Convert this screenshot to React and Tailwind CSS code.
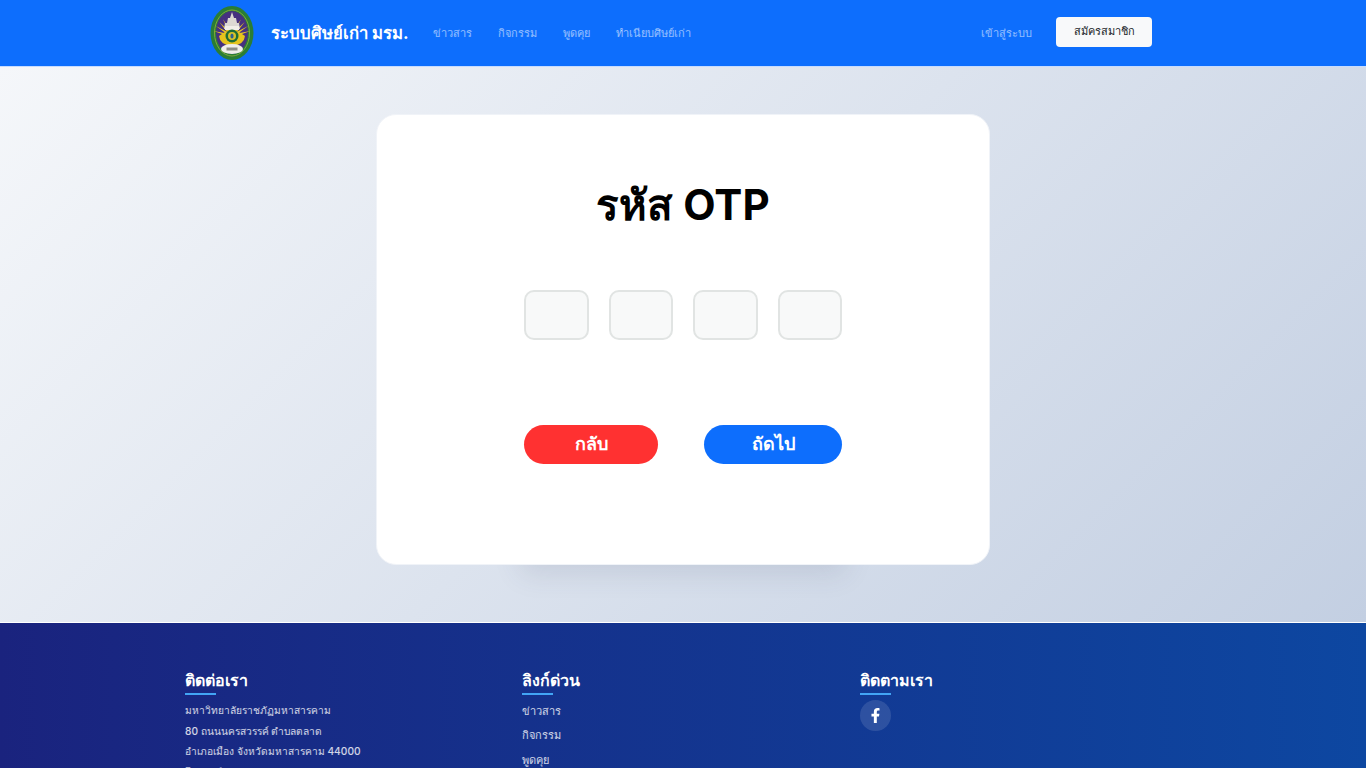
import { FaFacebookF } from 'react-icons/fa';

const font = '[font-family:Inter,"Noto_Sans",sans-serif]';

const rays = [-75, -58, -42, -28, 28, 42, 58, 75];

const Logo = () => (
  <svg width="44" height="56" viewBox="0 0 44 56" className="shrink-0">
    <ellipse cx="22" cy="28" rx="21.5" ry="27" fill="#2a7d35" />
    <ellipse cx="22" cy="28" rx="17.5" ry="23" fill="none" stroke="#7fa83a" strokeWidth="1" />
    <ellipse cx="22" cy="27.5" rx="16" ry="21.5" fill="#46307f" />
    {rays.map((a) => (
      <path key={a} d="M20.5 31 L22 12 L23.5 31 Z" fill="#e9c71f" transform={`rotate(${a} 22 31)`} />
    ))}
    <path d="M9 31 Q10 40 22 41 Q34 40 35 31 L29 27 L15 27 Z" fill="#e6c41c" />
    <path d="M22 7 L24 13 L26 13 L27 18 L29 18 L30 24 L14 24 L15 18 L17 18 L18 13 L20 13 Z" fill="#ddd9d3" />
    <rect x="15" y="21" width="14" height="4" fill="#f2efe9" />
    <circle cx="22" cy="31" r="6.5" fill="#1e6d35" />
    <circle cx="22" cy="31" r="4" fill="#d8c327" />
    <ellipse cx="22" cy="31" rx="1.6" ry="2.6" fill="#2f5f8f" />
    <ellipse cx="22" cy="44" rx="11" ry="5" fill="#f0eeea" />
    <rect x="16.5" y="42.5" width="11" height="3" fill="#8d8d86" />
  </svg>
);

const NavLink = ({ children }) => (
  <a className="mt-[2px] block text-[11px] font-medium text-white/55">{children}</a>
);

const FooterTitle = ({ children }) => (
  <div className="mb-[5px] w-fit">
    <h3 className="text-[16px] leading-[24px] font-semibold text-white">{children}</h3>
    <div className="mt-[1px] h-[2px] w-[31px] bg-[#42a5f5]" />
  </div>
);

export default function App() {
  return (
    <div className={`${font} h-[768px] overflow-hidden bg-white`}>
      {/* Navbar */}
      <nav className="h-[67px] border-b border-[#c6dcff] bg-[#0d6efd]">
        <div className="mx-auto flex h-full w-[946px] items-center justify-between pr-[4px] pb-[1px]">
          <div className="flex items-center">
            <Logo />
            <span className="mt-[2px] ml-[17px] text-[16.7px] font-bold text-white">ระบบศิษย์เก่า มรม.</span>
            <div className="ml-[24px] flex items-center gap-[26px]">
              <NavLink>ข่าวสาร</NavLink>
              <NavLink>กิจกรรม</NavLink>
              <NavLink>พูดคุย</NavLink>
              <NavLink>ทำเนียบศิษย์เก่า</NavLink>
            </div>
          </div>
          <div className="flex items-center gap-[24px]">
            <NavLink>เข้าสู่ระบบ</NavLink>
            <button className="mb-[2px] h-[30px] w-[96px] rounded-[4px] bg-[#f8f9fa] text-[11px] font-medium text-[#212529]">
              สมัครสมาชิก
            </button>
          </div>
        </div>
      </nav>

      {/* OTP card */}
      <main className="flex h-[555px] justify-center bg-[linear-gradient(135deg,#f5f7fa_0%,#c3cfe2_100%)] pt-[47px]">
        <div className="flex h-[451px] w-[614px] flex-col items-center rounded-[20px] border border-[#f0f3f8] bg-white pt-[60px] shadow-[0_153px_26px_-145px_rgba(60,70,100,0.13)]">
          <h1 className="text-[42px] leading-[60px] font-bold text-black">รหัส OTP</h1>
          <div className="mt-[55px] flex gap-[20px]">
            {[0, 1, 2, 3].map((i) => (
              <div key={i} className="h-[50px] w-[64.5px] rounded-[10px] border-2 border-[#e1e4e3] bg-[#f8f9f9]" />
            ))}
          </div>
          <div className="mt-[85px] flex w-[318px] justify-between">
            <button className="h-[39px] w-[134px] rounded-[20px] bg-[#ff3131] pb-[2px] text-[18px] font-semibold text-white">กลับ</button>
            <button className="h-[39px] w-[138px] rounded-[20px] bg-[#0d6efd] pb-[2px] text-[18px] font-semibold text-white">ถัดไป</button>
          </div>
        </div>
      </main>

      {/* Footer */}
      <footer className="mt-[1px] h-[145px] overflow-hidden bg-[linear-gradient(90deg,#1a237e,#0d47a1)] pt-[45px]">
        <div className="mx-auto w-[1028px] pl-[16px]">
          <div className="grid grid-cols-3">
            <div>
              <FooterTitle>ติดต่อเรา</FooterTitle>
              <div className="mt-[1px] text-[10.2px] leading-[20.5px] font-medium text-white/80">
                <p>มหาวิทยาลัยราชภัฏมหาสารคาม</p>
                <p>80 ถนนนครสวรรค์ ตำบลตลาด</p>
                <p>อำเภอเมือง จังหวัดมหาสารคาม 44000</p>
                <p>โทรศัพท์ 043-722-118</p>
              </div>
            </div>
            <div>
              <FooterTitle>ลิงก์ด่วน</FooterTitle>
              <div className="-mt-[1px] flex flex-col text-[11px] leading-[24.4px] font-medium text-white/80">
                <a>ข่าวสาร</a>
                <a>กิจกรรม</a>
                <a>พูดคุย</a>
              </div>
            </div>
            <div>
              <FooterTitle>ติดตามเรา</FooterTitle>
              <a className="mt-[1px] flex h-[31px] w-[31px] items-center justify-center rounded-full bg-white/12 text-white">
                <FaFacebookF size={15} />
              </a>
            </div>
          </div>
        </div>
      </footer>
    </div>
  );
}
